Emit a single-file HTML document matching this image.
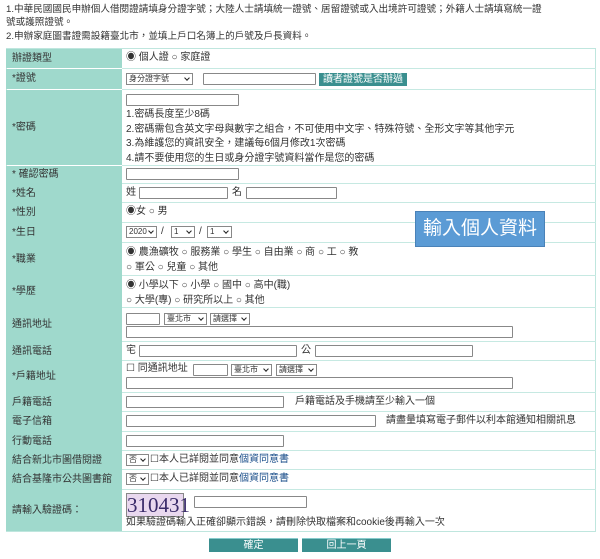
<!DOCTYPE html>
<html><head><meta charset="utf-8"><style>
*{margin:0;padding:0;box-sizing:border-box}
body{width:600px;height:559px;background:#fff;position:relative;overflow:hidden;font-family:"Liberation Sans","Noto Sans CJK TC",sans-serif;font-size:10px;line-height:12px;color:#333}
.a{position:absolute;white-space:nowrap}
.tbl{position:absolute;left:6px;top:48px;width:590px;height:484px;border:1px solid #bfe6de;background:#fff}
.lab{position:absolute;left:6px;width:116px;background:#9fd9cc;padding-left:6px;display:flex;align-items:center}
.line{position:absolute;left:122px;width:474px;height:1px;background:#c6e9e2}
.in{position:absolute;height:12px;border:1px solid #888;background:#fff;border-radius:1px}
.sel{position:absolute;height:12px;border:1px solid #888;background:#fff;font-size:8px;line-height:10px;padding-left:2px}
.sel:after{content:"";position:absolute;right:3px;top:2px;width:3px;height:3px;border-right:1.5px solid #222;border-bottom:1.5px solid #222;transform:rotate(45deg)}
.btn{position:absolute;background:#3a8f8f;color:#fff;text-align:center;border-top:1px solid #8cc;font-size:10px;line-height:13px}
</style></head><body>
<div class="a" style="left:6px;top:4px;font-size:9.6px">1.中華民國國民申辦個人借閱證請填身分證字號；大陸人士請填統一證號、居留證號或入出境許可證號；外籍人士請填寫統一證</div>
<div class="a" style="left:6px;top:17px;font-size:9.6px">號或護照證號。</div>
<div class="a" style="left:6px;top:31px;font-size:9.6px">2.申辦家庭圖書證需設籍臺北市，並填上戶口名簿上的戶號及戶長資料。</div>
<div class="tbl"></div>
<div class="lab" style="top:49px;height:19px">辦證類型</div>
<div class="lab" style="top:69px;height:20px">*證號</div>
<div class="lab" style="top:90px;height:75px">*密碼</div>
<div class="lab" style="top:166px;height:18px">* 確認密碼</div>
<div class="lab" style="top:184px;height:19px">*姓名</div>
<div class="lab" style="top:203px;height:20px">*性別</div>
<div class="lab" style="top:223px;height:20px">*生日</div>
<div class="lab" style="top:243px;height:33px">*職業</div>
<div class="lab" style="top:276px;height:32px">*學歷</div>
<div class="lab" style="top:308px;height:34px">通訊地址</div>
<div class="lab" style="top:342px;height:19px">通訊電話</div>
<div class="lab" style="top:361px;height:32px">*戶籍地址</div>
<div class="lab" style="top:393px;height:19px">戶籍電話</div>
<div class="lab" style="top:412px;height:20px">電子信箱</div>
<div class="lab" style="top:432px;height:19px">行動電話</div>
<div class="lab" style="top:451px;height:19px">結合新北市圖借閱證</div>
<div class="lab" style="top:470px;height:20px">結合基隆市公共圖書館</div>
<div class="lab" style="top:490px;height:41px">請輸入驗證碼：</div>
<div class="line" style="top:68px"></div><div class="line" style="top:89px"></div><div class="line" style="top:165px"></div><div class="line" style="top:183px"></div><div class="line" style="top:202px"></div><div class="line" style="top:222px"></div><div class="line" style="top:242px"></div><div class="line" style="top:275px"></div><div class="line" style="top:307px"></div><div class="line" style="top:341px"></div><div class="line" style="top:360px"></div><div class="line" style="top:392px"></div><div class="line" style="top:411px"></div><div class="line" style="top:431px"></div><div class="line" style="top:450px"></div><div class="line" style="top:469px"></div><div class="line" style="top:489px"></div>

<div class="a" style="left:126px;top:52px">◉ 個人證 ○ 家庭證</div>
<div class="sel" style="left:126px;top:73px;width:67px">身分證字號</div>
<div class="in" style="left:203px;top:73px;width:113px"></div>
<div class="a" style="left:319px;top:73px;width:88px;height:13px;background:#3a8f8f;color:#fff;text-align:center;line-height:13px">讀者證號是否辦過</div>
<div class="in" style="left:126px;top:94px;width:113px"></div>
<div class="a" style="left:126px;top:108px;line-height:14.5px">1.密碼長度至少8碼<br>2.密碼需包含英文字母與數字之組合，不可使用中文字、特殊符號、全形文字等其他字元<br>3.為維護您的資訊安全，建議每6個月修改1次密碼<br>4.請不要使用您的生日或身分證字號資料當作是您的密碼</div>
<div class="in" style="left:126px;top:168px;width:113px"></div>
<div class="a" style="left:126px;top:187px">姓</div><div class="in" style="left:139px;top:187px;width:89px"></div>
<div class="a" style="left:232px;top:187px">名</div><div class="in" style="left:246px;top:187px;width:91px"></div>
<div class="a" style="left:126px;top:206px">◉女 ○ 男</div>
<div class="sel" style="left:126px;top:226px;width:31px">2020</div><div class="a" style="left:161px;top:226px">/</div>
<div class="sel" style="left:171px;top:226px;width:24px">1</div><div class="a" style="left:199px;top:226px">/</div>
<div class="sel" style="left:207px;top:226px;width:25px">1</div>
<div class="a" style="left:415px;top:211px;width:130px;height:36px;background:#5b9bd5;border:1px solid #4a82b8;color:#fff;font-size:19px;line-height:34px;text-align:center">輸入個人資料</div>
<div class="a" style="left:126px;top:245px;line-height:15px">◉ 農漁礦牧 ○ 服務業 ○ 學生 ○ 自由業 ○ 商 ○ 工 ○ 教<br>○ 軍公 ○ 兒童 ○ 其他</div>
<div class="a" style="left:126px;top:278px;line-height:15px">◉ 小學以下 ○ 小學 ○ 國中 ○ 高中(職)<br>○ 大學(專) ○ 研究所以上 ○ 其他</div>
<div class="in" style="left:126px;top:313px;width:34px"></div>
<div class="sel" style="left:164px;top:313px;width:43px">臺北市</div>
<div class="sel" style="left:210px;top:313px;width:40px">請選擇</div>
<div class="in" style="left:126px;top:326px;width:387px"></div>
<div class="a" style="left:126px;top:345px">宅</div><div class="in" style="left:139px;top:345px;width:158px"></div>
<div class="a" style="left:301px;top:345px">公</div><div class="in" style="left:315px;top:345px;width:158px"></div>
<div class="a" style="left:126px;top:363px">☐ 同通訊地址</div>
<div class="in" style="left:193px;top:364px;width:35px"></div>
<div class="sel" style="left:231px;top:364px;width:41px">臺北市</div>
<div class="sel" style="left:276px;top:364px;width:41px">請選擇</div>
<div class="in" style="left:126px;top:377px;width:387px"></div>
<div class="in" style="left:126px;top:396px;width:158px"></div>
<div class="a" style="left:295px;top:396px">戶籍電話及手機請至少輸入一個</div>
<div class="in" style="left:126px;top:415px;width:250px"></div>
<div class="a" style="left:386px;top:415px">請盡量填寫電子郵件以利本館通知相關訊息</div>
<div class="in" style="left:126px;top:435px;width:158px"></div>
<div class="sel" style="left:126px;top:454px;width:23px">否</div>
<div class="a" style="left:150px;top:454px">☐本人已詳閱並同意<span style="color:#1a4e8a">個資同意書</span></div>
<div class="sel" style="left:126px;top:473px;width:23px">否</div>
<div class="a" style="left:150px;top:473px">☐本人已詳閱並同意<span style="color:#1a4e8a">個資同意書</span></div>
<div class="a" style="left:126px;top:493px;width:58px;height:24px;background:#e9d8ef;border:1px solid #888;font-family:'Liberation Serif',serif;font-size:21px;line-height:23px;color:#3a2b6a;text-align:center">310431</div>
<div class="in" style="left:194px;top:496px;width:113px"></div>
<div class="a" style="left:126px;top:517px">如果驗證碼輸入正確卻顯示錯誤，請刪除快取檔案和cookie後再輸入一次</div>
<div class="btn" style="left:209px;top:538px;width:89px;height:14px">確定</div>
<div class="btn" style="left:302px;top:538px;width:89px;height:14px">回上一頁</div>
</body></html>
